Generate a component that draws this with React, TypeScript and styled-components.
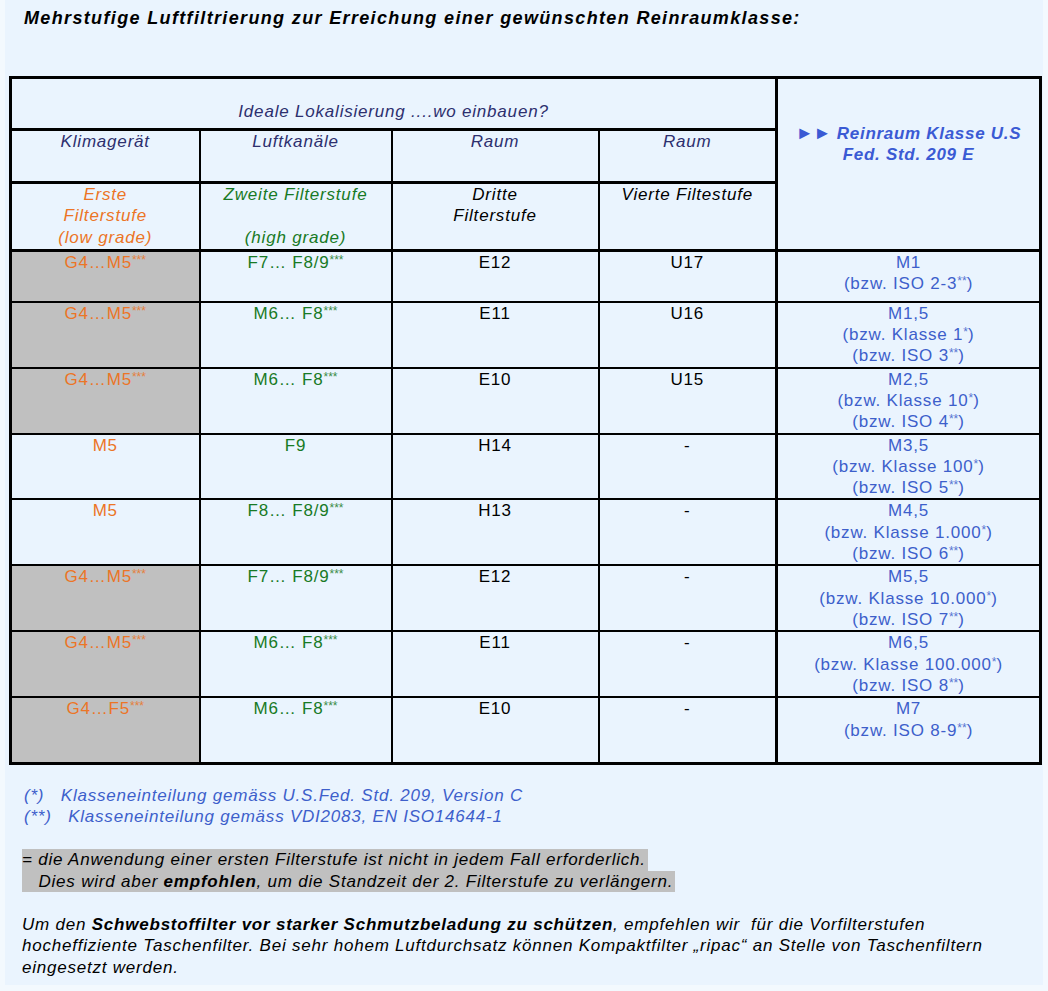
import React from "react";
import styled, { createGlobalStyle, css } from "styled-components";

const GlobalStyle = createGlobalStyle`
  html, body {
    margin: 0;
    padding: 0;
    background: #f3f9fe;
  }
  body {
    font-family: "Liberation Sans", Arial, sans-serif;
    color: #000;
  }
`;

const colors = {
  page: "#eaf4fe",
  grey: "#c0c0c0",
  navy: "#2d2f6e",
  orange: "#ec7526",
  green: "#187a25",
  blue: "#3d5fcb",
  head: "#3a5ad4",
};

type Tone = "orange" | "green" | "black" | "blue" | "navy";

const Page = styled.div`
  margin: 0 5px;
  min-height: 985px;
  background: ${colors.page};
  padding: 7px 0 0 4px;
  box-sizing: border-box;
`;

const Title = styled.h1`
  margin: 0 0 47px 15px;
  font-size: 18px;
  line-height: 22px;
  font-weight: bold;
  font-style: italic;
  letter-spacing: 1.35px;
`;

const Table = styled.table`
  width: 1030px;
  table-layout: fixed;
  border-collapse: collapse;
  border: 3px solid #000;
  font-size: 17px;
  line-height: 21.3px;
  letter-spacing: 0.8px;
`;

const Row = styled.tr<{ $h: number }>`
  height: ${(p) => p.$h}px;
`;

const Cell = styled.td<{
  $tone?: Tone;
  $shade?: boolean;
  $italic?: boolean;
  $thickBottom?: boolean;
  $thickRight?: boolean;
  $padTop?: number;
}>`
  border: 2px solid #000;
  padding: ${(p) => p.$padTop ?? 0}px 2px 0;
  vertical-align: top;
  text-align: center;
  background: ${(p) => (p.$shade ? colors.grey : colors.page)};
  color: ${(p) => colors[p.$tone as keyof typeof colors] ?? "#000"};
  font-style: ${(p) => (p.$italic ? "italic" : "normal")};
  ${(p) =>
    p.$thickBottom &&
    css`
      border-bottom-width: 3px;
    `}
  ${(p) =>
    p.$thickRight &&
    css`
      border-right-width: 3px;
    `}
`;

const ClassHead = styled.td`
  border: 2px solid #000;
  border-left-width: 3px;
  border-bottom-width: 3px;
  padding: 44px 2px 0;
  vertical-align: top;
  text-align: center;
  color: ${colors.head};
  font-weight: bold;
  font-style: italic;
  letter-spacing: 0.7px;
`;

const Arrows = styled.span`
  font-style: normal;
  font-size: 18px;
  letter-spacing: 0;
`;

const Sup = styled.span`
  font-size: 12px;
  line-height: 0;
  letter-spacing: 0;
  vertical-align: 4px;
  opacity: 0.85;
`;

const Notes = styled.div`
  margin: 20px 0 0 13px;
  font-size: 17px;
  line-height: 21.5px;
  font-style: italic;
  letter-spacing: 0.78px;
`;

const Footnotes = styled.div`
  color: ${colors.blue};
  margin-left: 2px;
`;

const Highlight = styled.div`
  margin-top: 21.5px;
`;

const Marked = styled.span`
  display: inline-block;
  background: ${colors.grey};
  padding-right: 2px;
  white-space: pre;
`;

const Paragraph = styled.p`
  margin: 21.5px 0 0;
`;

const withSup = (text: string) =>
  text.split(/(\*+)/).map((part, i) =>
    /^\*+$/.test(part) ? <Sup key={i}>{part}</Sup> : <React.Fragment key={i}>{part}</React.Fragment>
  );

const lines = (items: string[]) =>
  items.map((t, i) => (
    <React.Fragment key={i}>
      {i > 0 && <br />}
      {withSup(t)}
    </React.Fragment>
  ));

type DataRow = {
  h: number;
  first: string;
  shade?: boolean;
  second: string;
  third: string;
  fourth: string;
  cls: string[];
};

const rows: DataRow[] = [
  { h: 51, first: "G4…M5***", shade: true, second: "F7… F8/9***", third: "E12", fourth: "U17", cls: ["M1", "(bzw. ISO 2-3**)"] },
  { h: 66, first: "G4…M5***", shade: true, second: "M6… F8***", third: "E11", fourth: "U16", cls: ["M1,5", "(bzw. Klasse 1*)", "(bzw. ISO 3**)"] },
  { h: 66, first: "G4…M5***", shade: true, second: "M6… F8***", third: "E10", fourth: "U15", cls: ["M2,5", "(bzw. Klasse 10*)", "(bzw. ISO 4**)"] },
  { h: 65, first: "M5", second: "F9", third: "H14", fourth: "-", cls: ["M3,5", "(bzw. Klasse 100*)", "(bzw. ISO 5**)"] },
  { h: 66, first: "M5", second: "F8… F8/9***", third: "H13", fourth: "-", cls: ["M4,5", "(bzw. Klasse 1.000*)", "(bzw. ISO 6**)"] },
  { h: 66, first: "G4…M5***", shade: true, second: "F7… F8/9***", third: "E12", fourth: "-", cls: ["M5,5", "(bzw. Klasse 10.000*)", "(bzw. ISO 7**)"] },
  { h: 66, first: "G4…M5***", shade: true, second: "M6… F8***", third: "E11", fourth: "-", cls: ["M6,5", "(bzw. Klasse 100.000*)", "(bzw. ISO 8**)"] },
  { h: 66, first: "G4…F5***", shade: true, second: "M6… F8***", third: "E10", fourth: "-", cls: ["M7", "(bzw. ISO 8-9**)"] },
];

export default function App() {
  return (
    <>
      <GlobalStyle />
      <Page>
        <Title>Mehrstufige Luftfiltrierung zur Erreichung einer gewünschten Reinraumklasse:</Title>

        <Table>
          <colgroup>
            <col style={{ width: 189 }} />
            <col style={{ width: 192 }} />
            <col style={{ width: 207 }} />
            <col style={{ width: 178 }} />
            <col style={{ width: 264 }} />
          </colgroup>
          <tbody>
            <Row $h={52}>
              <Cell colSpan={4} $tone="navy" $italic $thickBottom $thickRight $padTop={22}>
                Ideale Lokalisierung ....wo einbauen?
              </Cell>
              <ClassHead rowSpan={3}>
                <Arrows>►►</Arrows> Reinraum Klasse U.S
                <br />
                Fed. Std. 209 E
              </ClassHead>
            </Row>
            <Row $h={53}>
              <Cell $tone="navy" $italic $thickBottom>Klimagerät</Cell>
              <Cell $tone="navy" $italic $thickBottom>Luftkanäle</Cell>
              <Cell $tone="navy" $italic $thickBottom>Raum</Cell>
              <Cell $tone="navy" $italic $thickBottom $thickRight>Raum</Cell>
            </Row>
            <Row $h={68}>
              <Cell $tone="orange" $italic $thickBottom>{lines(["Erste", "Filterstufe", "(low grade)"])}</Cell>
              <Cell $tone="green" $italic $thickBottom>{lines(["Zweite Filterstufe", "", "(high grade)"])}</Cell>
              <Cell $italic $thickBottom>{lines(["Dritte", "Filterstufe"])}</Cell>
              <Cell $italic $thickBottom $thickRight>Vierte Filtestufe</Cell>
            </Row>
            {rows.map((r, i) => (
              <Row key={i} $h={r.h}>
                <Cell $tone="orange" $shade={r.shade}>{withSup(r.first)}</Cell>
                <Cell $tone="green">{withSup(r.second)}</Cell>
                <Cell>{r.third}</Cell>
                <Cell $thickRight>{r.fourth}</Cell>
                <Cell $tone="blue">{lines(r.cls)}</Cell>
              </Row>
            ))}
          </tbody>
        </Table>

        <Notes>
          <Footnotes>
            (*)&nbsp;&nbsp; Klasseneinteilung gemäss U.S.Fed. Std. 209, Version C
            <br />
            (**)&nbsp;&nbsp; Klasseneinteilung gemäss VDI2083, EN ISO14644-1
          </Footnotes>

          <Highlight>
            <Marked>= die Anwendung einer ersten Filterstufe ist nicht in jedem Fall erforderlich.</Marked>
            <br />
            <Marked>
              {"   Dies wird aber "}
              <b>empfohlen</b>, um die Standzeit der 2. Filterstufe zu verlängern.
            </Marked>
          </Highlight>

          <Paragraph>
            Um den <b>Schwebstoffilter vor starker Schmutzbeladung zu schützen</b>, empfehlen wir&nbsp; für die
            Vorfilterstufen
            <br />
            hocheffiziente Taschenfilter. Bei sehr hohem Luftdurchsatz können Kompaktfilter „ripac“ an Stelle von
            Taschenfiltern
            <br />
            eingesetzt werden.
          </Paragraph>
        </Notes>
      </Page>
    </>
  );
}
